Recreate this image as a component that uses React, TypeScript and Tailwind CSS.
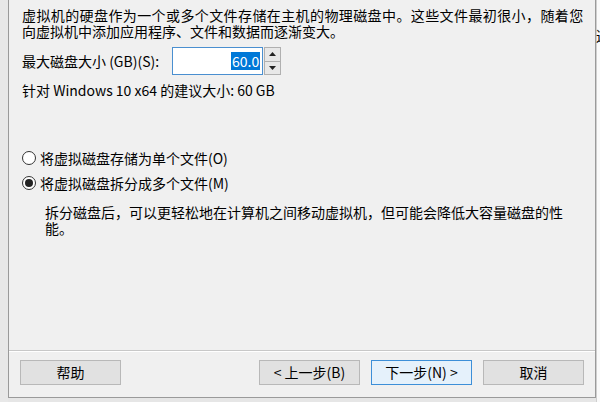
const font = { fontFamily: '"Noto Sans CJK SC", "Noto Sans", sans-serif' };

const Radio = ({ checked, label }: { checked?: boolean; label: string }) => (
  <div className="flex items-center h-[18px]">
    <span className="w-[14px] h-[14px] rounded-full border border-[#333] bg-white flex items-center justify-center">
      {checked && <span className="w-[8px] h-[8px] rounded-full bg-[#222]" />}
    </span>
    <span className="ml-[4px]">{label}</span>
  </div>
);

const Btn = ({ label, primary }: { label: string; primary?: boolean }) => (
  <button
    className={
      'w-[101px] h-[25px] flex items-center justify-center border text-[14px] leading-none ' +
      (primary ? 'border-[#3d8fd8] bg-[#e5f1fb]' : 'border-[#b8b8b8] bg-[#e1e1e1]')
    }
  >
    {label}
  </button>
);

export default function App() {
  return (
    <div className="w-[600px] h-[402px] flex bg-[#e6e6e6] text-black overflow-hidden" style={font}>
      <div className="w-[8px] shrink-0 bg-[#e8e8e8]" />
      <div className="w-[588px] h-[398px] shrink-0 flex flex-col bg-[#f0f0f0] border-l border-r border-b border-[#9a9a9a]">
        <div className="flex-1 flex flex-col pl-[13px] pt-[7px] text-[14px] leading-[16px]">
          <p>
            <span className="tracking-[0.4px]">虚拟机的硬盘作为一个或多个文件存储在主机的物理磁盘中。这些文件最初很小，随着您</span>
            <br />
            向虚拟机中添加应用程序、文件和数据而逐渐变大。
          </p>

          <div className="flex items-center mt-[8px]">
            <span>最大磁盘大小 (GB)(S):</span>
            <div className="ml-[13px] w-[91px] h-[28px] border border-[#4a8fd0] bg-white flex items-center justify-end pr-[2px]">
              <span className="bg-[#0078d7] text-white px-[1px] leading-[18px]">60.0</span>
            </div>
            <div className="ml-[1px] w-[17px] h-[28px] flex flex-col border border-[#b0b0b0] bg-[#e8e8e8]">
              <div className="flex-1 flex items-center justify-center border-b border-[#b0b0b0]">
                <svg width="7" height="4" viewBox="0 0 7 4"><path d="M3.5 0 L7 4 L0 4 Z" fill="#222" /></svg>
              </div>
              <div className="flex-1 flex items-center justify-center">
                <svg width="7" height="4" viewBox="0 0 7 4"><path d="M0 0 L7 0 L3.5 4 Z" fill="#222" /></svg>
              </div>
            </div>
          </div>

          <p className="mt-[7px]">针对 Windows 10 x64 的建议大小: 60 GB</p>

          <div className="mt-[51px] flex flex-col gap-[7px]">
            <Radio label="将虚拟磁盘存储为单个文件(O)" />
            <Radio checked label="将虚拟磁盘拆分成多个文件(M)" />
          </div>
          <p className="pl-[23px] mt-[12px]">
            拆分磁盘后，可以更轻松地在计算机之间移动虚拟机，但可能会降低大容量磁盘的性
            <br />
            能。
          </p>
        </div>
        <div className="h-[2px] border-t border-[#c8c8c8] border-b border-b-white" />
        <div className="h-[45px] flex items-center px-[11px] pb-[6px] pt-[1px]">
          <Btn label="帮助" />
          <div className="flex-1" />
          <div className="flex gap-[11px]">
            <Btn label="< 上一步(B)" />
            <Btn primary label="下一步(N) >" />
            <Btn label="取消" />
          </div>
        </div>
      </div>
      <div className="flex-1 bg-[#fafafa] border-l border-[#cfcfcf] pt-[27px] text-[14px] leading-[16px] whitespace-nowrap">
        <span className="ml-[-1px]">这</span>
      </div>
    </div>
  );
}
